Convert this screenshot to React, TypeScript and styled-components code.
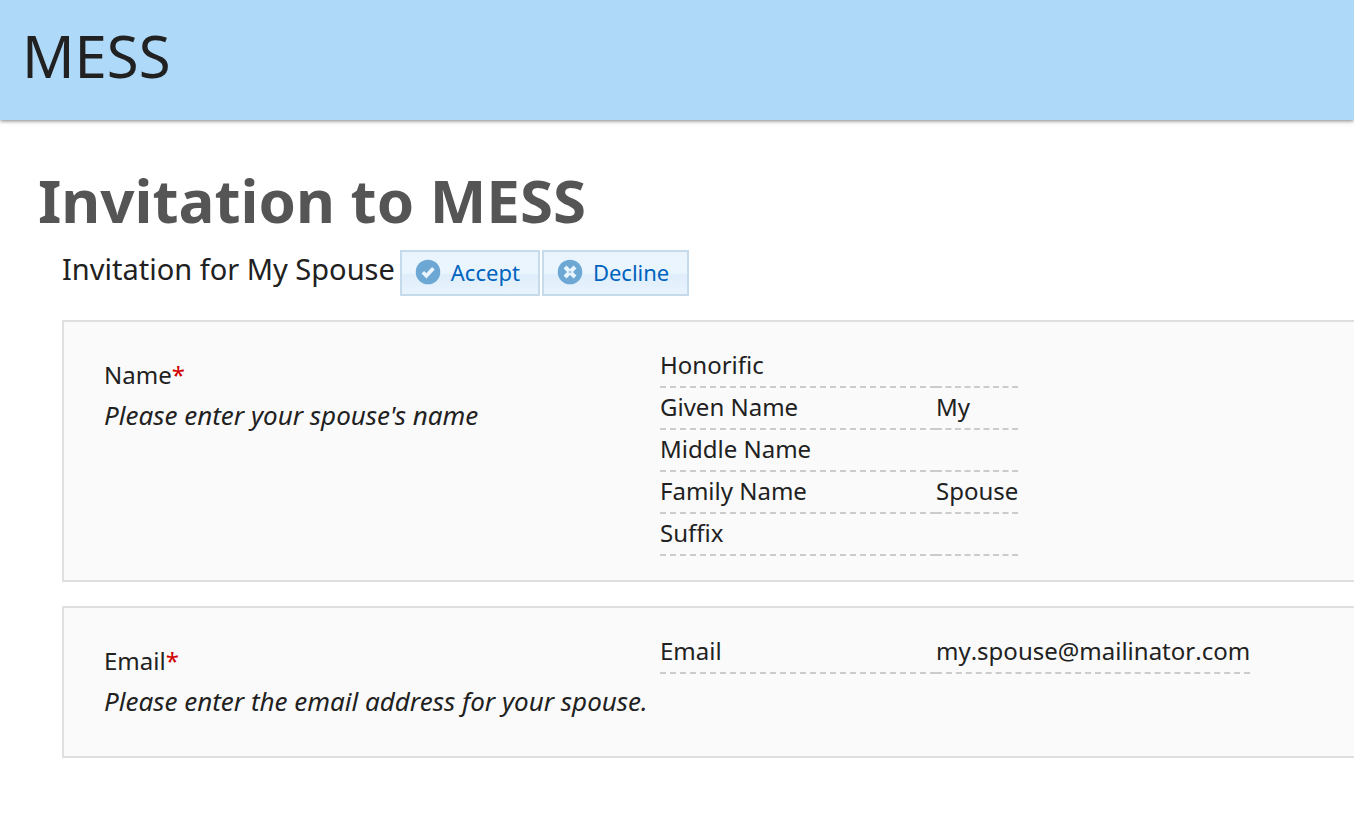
import React from "react";
import styled, { createGlobalStyle } from "styled-components";

const GlobalStyle = createGlobalStyle`
  *, *::before, *::after { box-sizing: border-box; }
  body {
    margin: 0;
    background: #fff;
    color: #212121;
    font-family: "Noto Sans", "Open Sans", sans-serif;
    font-size: 24px;
    line-height: 40px;
  }
`;

const TopBar = styled.header`
  display: flex;
  align-items: center;
  padding: 16px 22px 24px;
  background: #aed9f9;
  box-shadow: 0 1px 4px rgba(0, 0, 0, 0.5);
`;

const Brand = styled.span`
  font-size: 58px;
  line-height: 80px;
`;

const Main = styled.main`
  padding: 40px 0 40px 38px;
`;

const Title = styled.h1`
  margin: 0;
  color: #555;
  font-size: 60px;
  font-weight: 700;
  line-height: 80px;
`;

const Content = styled.div`
  display: flex;
  flex-direction: column;
  gap: 24px;
  padding: 10px 0 0 24px;
`;

const ActionRow = styled.div`
  display: flex;
  align-items: flex-start;
  gap: 5px;
`;

const Subtitle = styled.h2`
  margin: 0;
  font-size: 29px;
  font-weight: 400;
  line-height: 38px;
`;

const ButtonGroup = styled.div`
  display: flex;
  gap: 2px;
`;

const ActionButton = styled.button`
  display: flex;
  align-items: flex-start;
  gap: 10px;
  height: 46px;
  padding: 7px 18px 7px 13px;
  border: 2px solid #c5dbec;
  background: linear-gradient(#e9f4fd 0%, #eaf5fe 50%, #dfeefb 54%, #e8f3fd 100%);
  color: #0063be;
  font-family: inherit;
  font-size: 22px;
  font-weight: 400;
  line-height: 26px;
  cursor: pointer;
`;

const Icon = styled.svg`
  display: block;
  width: 26px;
  height: 26px;
`;

const Card = styled.section`
  display: grid;
  grid-template-columns: 556px 1fr;
  align-items: start;
  padding: 24px 0 24px 40px;
  border: 2px solid #dfdfdf;
  border-right: 0;
  background: #fafafa;
`;

const Prompt = styled.div`
  padding: 9px 0 11px;
`;

const PromptLabel = styled.div``;

const Required = styled.span`
  color: #d00000;
`;

const Hint = styled.div`
  font-size: 26px;
  font-style: italic;
`;

const FieldTable = styled.table`
  justify-self: start;
  border-collapse: separate;
  border-spacing: 0;
  line-height: 38px;
`;

const FieldName = styled.th`
  width: 276px;
  padding: 0 0 2px;
  border-bottom: 2px dashed #ccc;
  font-weight: 400;
  text-align: left;
`;

const FieldValue = styled.td`
  padding: 0 0 2px;
  border-bottom: 2px dashed #ccc;
  font-kerning: none;
`;

const CheckIcon = () => (
  <Icon viewBox="0 0 26 26" aria-hidden="true">
    <circle cx="13" cy="13" r="12.3" fill="#6da8d5" />
    <path d="M7.8 13.2l3.6 3.6 7-7.6" fill="none" stroke="#eaf5fe" strokeWidth="3.6" />
  </Icon>
);

const CrossIcon = () => (
  <Icon viewBox="0 0 26 26" aria-hidden="true">
    <circle cx="13" cy="13" r="12.3" fill="#6da8d5" />
    <path d="M8 8l10 10M18 8L8 18" fill="none" stroke="#eaf5fe" strokeWidth="4" />
    <circle cx="13" cy="13" r="1.6" fill="#a9cdea" />
  </Icon>
);

interface Field {
  name: string;
  value: string;
}

interface Question {
  label: string;
  hint: string;
  fields: Field[];
}

const questions: Question[] = [
  {
    label: "Name",
    hint: "Please enter your spouse's name",
    fields: [
      { name: "Honorific", value: "" },
      { name: "Given Name", value: "My" },
      { name: "Middle Name", value: "" },
      { name: "Family Name", value: "Spouse" },
      { name: "Suffix", value: "" },
    ],
  },
  {
    label: "Email",
    hint: "Please enter the email address for your spouse.",
    fields: [{ name: "Email", value: "my.spouse@mailinator.com" }],
  },
];

export default function App() {
  return (
    <>
      <GlobalStyle />
      <TopBar>
        <Brand>MESS</Brand>
      </TopBar>
      <Main>
        <Title>Invitation to MESS</Title>
        <Content>
          <ActionRow>
            <Subtitle>Invitation for My Spouse</Subtitle>
            <ButtonGroup>
              <ActionButton type="button">
                <CheckIcon />
                Accept
              </ActionButton>
              <ActionButton type="button">
                <CrossIcon />
                Decline
              </ActionButton>
            </ButtonGroup>
          </ActionRow>
          {questions.map((question) => (
            <Card key={question.label}>
              <Prompt>
                <PromptLabel>
                  {question.label}
                  <Required>*</Required>
                </PromptLabel>
                <Hint>{question.hint}</Hint>
              </Prompt>
              <FieldTable>
                <tbody>
                  {question.fields.map((field) => (
                    <tr key={field.name}>
                      <FieldName scope="row">{field.name}</FieldName>
                      <FieldValue>{field.value}</FieldValue>
                    </tr>
                  ))}
                </tbody>
              </FieldTable>
            </Card>
          ))}
        </Content>
      </Main>
    </>
  );
}
